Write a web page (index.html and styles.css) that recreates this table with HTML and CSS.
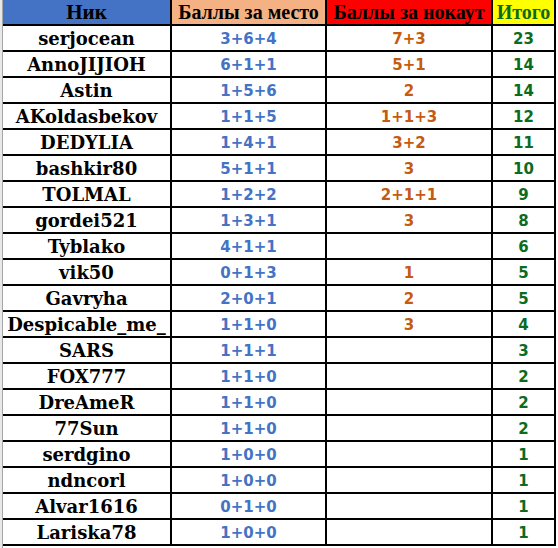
FILE: index.html
```html
<!DOCTYPE html>
<html>
<head>
<meta charset="utf-8">
<link rel="stylesheet" href="styles.css">
</head>
<body>
<div class="sheet">
  <div class="edge"></div>
  <div class="grid">
    <div class="h h-nick">Ник</div>
    <div class="h h-place">Баллы за место</div>
    <div class="h h-ko">Баллы за нокаут</div>
    <div class="h h-total">Итого</div>

    <div class="c nick">serjocean</div><div class="c place">3+6+4</div><div class="c ko">7+3</div><div class="c total">23</div>
    <div class="c nick">AnnoJIJIOH</div><div class="c place">6+1+1</div><div class="c ko">5+1</div><div class="c total">14</div>
    <div class="c nick">Astin</div><div class="c place">1+5+6</div><div class="c ko">2</div><div class="c total">14</div>
    <div class="c nick">AKoldasbekov</div><div class="c place">1+1+5</div><div class="c ko">1+1+3</div><div class="c total">12</div>
    <div class="c nick">DEDYLIA</div><div class="c place">1+4+1</div><div class="c ko">3+2</div><div class="c total">11</div>
    <div class="c nick">bashkir80</div><div class="c place">5+1+1</div><div class="c ko">3</div><div class="c total">10</div>
    <div class="c nick">TOLMAL</div><div class="c place">1+2+2</div><div class="c ko">2+1+1</div><div class="c total">9</div>
    <div class="c nick">gordei521</div><div class="c place">1+3+1</div><div class="c ko">3</div><div class="c total">8</div>
    <div class="c nick">Tyblako</div><div class="c place">4+1+1</div><div class="c ko"></div><div class="c total">6</div>
    <div class="c nick">vik50</div><div class="c place">0+1+3</div><div class="c ko">1</div><div class="c total">5</div>
    <div class="c nick">Gavryha</div><div class="c place">2+0+1</div><div class="c ko">2</div><div class="c total">5</div>
    <div class="c nick">Despicable_me_</div><div class="c place">1+1+0</div><div class="c ko">3</div><div class="c total">4</div>
    <div class="c nick">SARS</div><div class="c place">1+1+1</div><div class="c ko"></div><div class="c total">3</div>
    <div class="c nick">FOX777</div><div class="c place">1+1+0</div><div class="c ko"></div><div class="c total">2</div>
    <div class="c nick">DreAmeR</div><div class="c place">1+1+0</div><div class="c ko"></div><div class="c total">2</div>
    <div class="c nick">77Sun</div><div class="c place">1+1+0</div><div class="c ko"></div><div class="c total">2</div>
    <div class="c nick">serdgino</div><div class="c place">1+0+0</div><div class="c ko"></div><div class="c total">1</div>
    <div class="c nick">ndncorl</div><div class="c place">1+0+0</div><div class="c ko"></div><div class="c total">1</div>
    <div class="c nick">Alvar1616</div><div class="c place">0+1+0</div><div class="c ko"></div><div class="c total">1</div>
    <div class="c nick">Lariska78</div><div class="c place">1+0+0</div><div class="c ko"></div><div class="c total">1</div>
  </div>
</div>
</body>
</html>
```
FILE: styles.css
```css
html, body {
  margin: 0;
  padding: 0;
  background: #ffffff;
}
.sheet {
  display: flex;
  width: 558px;
  height: 548px;
  overflow: hidden;
}
.edge {
  width: 2px;
  background: #e8e8e8;
  border-right: 1px solid #a6a6a6;
  height: 548px;
  flex: none;
}
.grid {
  display: grid;
  grid-template-columns: 167px 153px 164px 61px;
  grid-template-rows: 24px repeat(20, 24px);
  gap: 2px;
  background: #000000;
  padding: 0 2px 2px 0;
  align-self: flex-start;
}
.h, .c {
  display: flex;
  align-items: center;
  justify-content: center;
  white-space: nowrap;
  overflow: hidden;
}
.h {
  font-family: "Liberation Serif", "DejaVu Serif", serif;
  font-weight: bold;
  font-size: 20px;
  color: #000000;
  padding-top: 1px;
}
.h-nick { background: #4472c4; font-size: 21px; }
.h-place { background: #f4b183; }
.h-ko { background: #ff0000; }
.h-total { background: #ffff00; color: #0b6b1e; }
.c {
  background: #ffffff;
  font-family: "DejaVu Sans", "Liberation Sans", sans-serif;
  font-weight: bold;
  font-size: 15px;
  padding-top: 1px;
}
.nick {
  font-family: "DejaVu Serif", "Liberation Serif", serif;
  font-size: 18px;
  color: #000000;
}
.place { color: #4472c4; }
.ko { color: #c55a11; }
.total { color: #0b6b1e; }
```
